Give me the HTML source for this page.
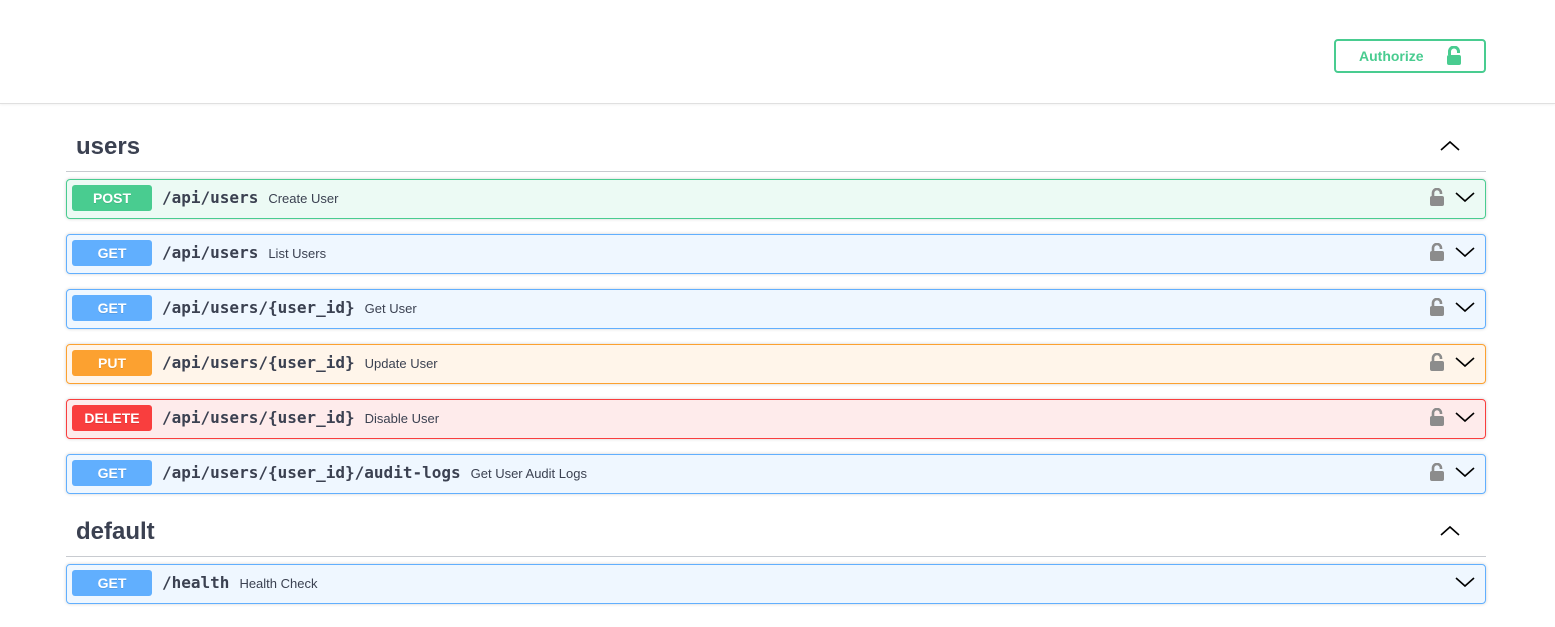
<!DOCTYPE html>
<html><head><meta charset="utf-8"><style>
*{box-sizing:border-box;margin:0;padding:0}
body{width:1555px;height:627px;background:#fff;font-family:"Liberation Sans",sans-serif;position:relative;overflow:hidden;color:#3b4151}
.hdr{position:absolute;left:0;top:0;width:1555px;height:104px;border-bottom:1px solid #e0e0e0;box-shadow:0 1px 2px rgba(0,0,0,.05)}
.auth{position:absolute;left:1334px;top:39px;width:152px;height:34px;border:2px solid #49cc90;border-radius:4px;color:#49cc90;font-weight:bold;font-size:14px;line-height:31px;padding-left:23px}
.auth svg{position:absolute;left:110px;top:5px}
.tag{position:absolute;left:66px;width:1420px;height:41px;border-bottom:1px solid #c8cbd0}
.tag h3{position:absolute;left:10px;top:2px;font-size:24px;font-weight:bold;color:#3b4151}
.tag svg{position:absolute;left:1374px;top:9px}
.op{position:absolute;left:66px;width:1420px;height:40px;border:1px solid;border-radius:4px;box-shadow:0 0 3px rgba(0,0,0,.19)}
.m{position:absolute;left:5px;top:5px;width:80px;height:26px;border-radius:3px;color:#fff;font-weight:bold;font-size:14px;text-align:center;line-height:26px;text-shadow:0 1px 0 rgba(0,0,0,.1)}
.p{position:absolute;left:95px;top:8px;font-family:"DejaVu Sans Mono","Liberation Mono",monospace;font-weight:bold;font-size:16px;color:#3b4151}
.s{font-family:"Liberation Sans",sans-serif;font-weight:normal;font-size:13px;margin-left:10px}
.lk{position:absolute;left:1363px;top:8px}
.ch{position:absolute;left:1388px;top:11px}
.post{border-color:#49cc90;background:rgba(73,204,144,.1)}.post .m{background:#49cc90}
.get{border-color:#61affe;background:rgba(97,175,254,.1)}.get .m{background:#61affe}
.put{border-color:#fca130;background:rgba(252,161,48,.1)}.put .m{background:#fca130}
.del{border-color:#f93e3e;background:rgba(249,62,62,.1)}.del .m{background:#f93e3e}
</style></head><body>
<div class="hdr"><div class="auth">Authorize<svg width="16" height="20" viewBox="0 0 16 20"><path d="M3.5 9V5.5a4.5 4.5 0 0 1 9 0V7" fill="none" stroke="#49cc90" stroke-width="3"/><rect x="1" y="9" width="14" height="10" rx="2" fill="#49cc90"/></svg></div></div>

<div class="tag" style="top:131px"><h3>users</h3><svg width="20" height="12" viewBox="0 0 20 12"><path d="M1 10L10 2l9 8" fill="none" stroke="#000" stroke-width="1.6"/></svg></div>

<div class="op post" style="top:179px"><div class="m">POST</div><div class="p">/api/users<span class="s">Create User</span></div><svg class="lk" width="14" height="18" viewBox="0 0 14 18"><path d="M3 8V5a4 4 0 0 1 8 0v1" fill="none" stroke="#8c8c8c" stroke-width="2.6"/><rect x="0" y="8" width="14" height="10" rx="2" fill="#8c8c8c"/></svg><svg class="ch" width="20" height="12" viewBox="0 0 20 12"><path d="M1 2l9 8 9-8" fill="none" stroke="#000" stroke-width="1.6"/></svg></div>

<div class="op get" style="top:234px"><div class="m">GET</div><div class="p">/api/users<span class="s">List Users</span></div><svg class="lk" width="14" height="18" viewBox="0 0 14 18"><path d="M3 8V5a4 4 0 0 1 8 0v1" fill="none" stroke="#8c8c8c" stroke-width="2.6"/><rect x="0" y="8" width="14" height="10" rx="2" fill="#8c8c8c"/></svg><svg class="ch" width="20" height="12" viewBox="0 0 20 12"><path d="M1 2l9 8 9-8" fill="none" stroke="#000" stroke-width="1.6"/></svg></div>

<div class="op get" style="top:289px"><div class="m">GET</div><div class="p">/api/users/{user_id}<span class="s">Get User</span></div><svg class="lk" width="14" height="18" viewBox="0 0 14 18"><path d="M3 8V5a4 4 0 0 1 8 0v1" fill="none" stroke="#8c8c8c" stroke-width="2.6"/><rect x="0" y="8" width="14" height="10" rx="2" fill="#8c8c8c"/></svg><svg class="ch" width="20" height="12" viewBox="0 0 20 12"><path d="M1 2l9 8 9-8" fill="none" stroke="#000" stroke-width="1.6"/></svg></div>

<div class="op put" style="top:344px"><div class="m">PUT</div><div class="p">/api/users/{user_id}<span class="s">Update User</span></div><svg class="lk" width="14" height="18" viewBox="0 0 14 18"><path d="M3 8V5a4 4 0 0 1 8 0v1" fill="none" stroke="#8c8c8c" stroke-width="2.6"/><rect x="0" y="8" width="14" height="10" rx="2" fill="#8c8c8c"/></svg><svg class="ch" width="20" height="12" viewBox="0 0 20 12"><path d="M1 2l9 8 9-8" fill="none" stroke="#000" stroke-width="1.6"/></svg></div>

<div class="op del" style="top:399px"><div class="m">DELETE</div><div class="p">/api/users/{user_id}<span class="s">Disable User</span></div><svg class="lk" width="14" height="18" viewBox="0 0 14 18"><path d="M3 8V5a4 4 0 0 1 8 0v1" fill="none" stroke="#8c8c8c" stroke-width="2.6"/><rect x="0" y="8" width="14" height="10" rx="2" fill="#8c8c8c"/></svg><svg class="ch" width="20" height="12" viewBox="0 0 20 12"><path d="M1 2l9 8 9-8" fill="none" stroke="#000" stroke-width="1.6"/></svg></div>

<div class="op get" style="top:454px"><div class="m">GET</div><div class="p">/api/users/{user_id}/audit-logs<span class="s">Get User Audit Logs</span></div><svg class="lk" width="14" height="18" viewBox="0 0 14 18"><path d="M3 8V5a4 4 0 0 1 8 0v1" fill="none" stroke="#8c8c8c" stroke-width="2.6"/><rect x="0" y="8" width="14" height="10" rx="2" fill="#8c8c8c"/></svg><svg class="ch" width="20" height="12" viewBox="0 0 20 12"><path d="M1 2l9 8 9-8" fill="none" stroke="#000" stroke-width="1.6"/></svg></div>

<div class="tag" style="top:516px"><h3>default</h3><svg width="20" height="12" viewBox="0 0 20 12"><path d="M1 10L10 2l9 8" fill="none" stroke="#000" stroke-width="1.6"/></svg></div>

<div class="op get" style="top:564px"><div class="m">GET</div><div class="p">/health<span class="s">Health Check</span></div><svg class="ch" width="20" height="12" viewBox="0 0 20 12"><path d="M1 2l9 8 9-8" fill="none" stroke="#000" stroke-width="1.6"/></svg></div>
</body></html>
